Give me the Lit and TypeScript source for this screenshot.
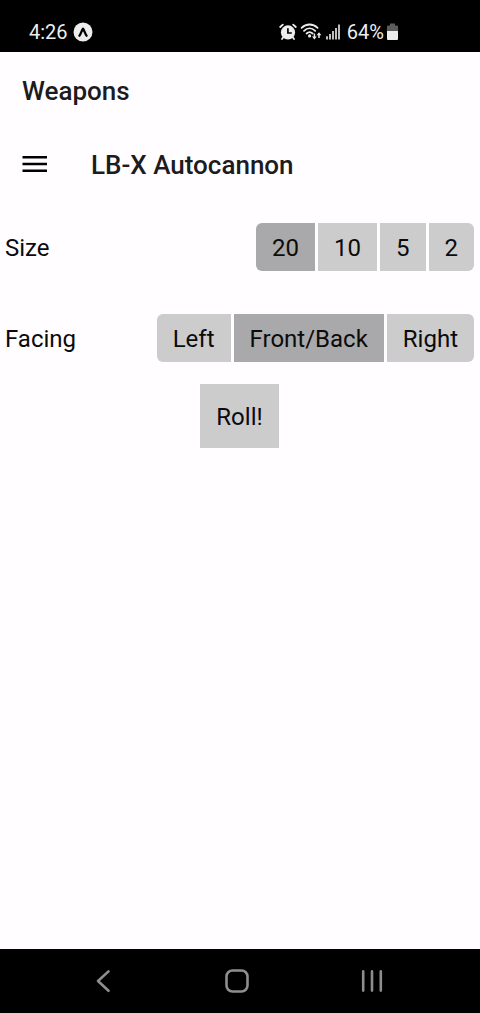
import { LitElement, html, css } from "lit";
import { customElement, property, state } from "lit/decorators.js";

@customElement("segmented-control")
export class SegmentedControl extends LitElement {
  @property() label = "";
  @property({ attribute: false }) options: string[] = [];
  @property() value = "";

  static styles = css`
    .row {
      display: flex;
      align-items: center;
      justify-content: space-between;
      min-height: 48px;
    }
    .label {
      padding-top: 2px;
    }
    .segments {
      display: flex;
      gap: 3px;
      border-radius: 6px;
      overflow: hidden;
    }
    .segment {
      height: 48px;
      padding: 2px 16px 0;
      border: 0;
      border-radius: 0;
      background: #cdcccd;
      color: #0b0b0b;
      font: inherit;
      cursor: pointer;
    }
    .segment[aria-pressed="true"] {
      background: #a9a8aa;
    }
  `;

  private pick(option: string) {
    this.value = option;
    this.dispatchEvent(new CustomEvent("pick", { detail: option }));
  }

  render() {
    return html`
      <div class="row">
        <span class="label" id="label">${this.label}</span>
        <div class="segments" role="group" aria-labelledby="label">
          ${this.options.map(
            (o) => html`<button
              class="segment"
              type="button"
              aria-pressed=${o === this.value ? "true" : "false"}
              @click=${() => this.pick(o)}
            >${o}</button>`
          )}
        </div>
      </div>
    `;
  }
}

@customElement("status-bar")
export class StatusBar extends LitElement {
  static styles = css`
    .bar {
      display: flex;
      align-items: center;
      justify-content: space-between;
      height: 52px;
      box-sizing: border-box;
      padding: 12px 82px 0 29px;
      background: #000;
      color: #ededed;
      font-size: 20px;
      line-height: 24px;
    }
    .group {
      display: flex;
      align-items: center;
    }
    .left {
      gap: 5px;
    }
    .right {
      gap: 3px;
    }
    svg {
      display: block;
    }
    .level {
      display: flex;
      align-items: center;
      gap: 3px;
      padding-left: 4px;
    }
  `;

  render() {
    return html`
      <div class="bar">
        <div class="group left">
          <span>4:26</span>
          <svg width="20" height="20" viewBox="0 0 20 20" aria-hidden="true">
            <circle cx="10" cy="10" r="9.5" fill="#ededed" />
            <path d="M6.4 13.7C7.8 12.2 8.7 8.4 10 6.6C11.3 8.4 12.2 12.2 13.6 13.7" fill="none" stroke="#000" stroke-width="2.3" stroke-linecap="round" stroke-linejoin="round" />
          </svg>
        </div>
        <div class="group right">
          <svg width="18" height="18" viewBox="0 0 18 18" aria-hidden="true">
            <circle cx="9" cy="9.4" r="7.1" fill="#ededed" />
            <path d="M1.2 4L3.8 1.6M16.8 4L14.2 1.6M4.4 14L3 16M13.6 14L15 16" stroke="#ededed" stroke-width="1.8" stroke-linecap="round" />
            <path d="M8.9 5.2V10H12.8" fill="none" stroke="#000" stroke-width="1.7" />
          </svg>
          <svg width="23" height="18" viewBox="1 0 23 18" aria-hidden="true">
            <g fill="none" stroke="#ededed" stroke-width="1.8" stroke-linecap="round">
              <path d="M2.6 4.8C7.2 0.4 14 0.4 18.6 4.8" />
              <path d="M5 7.8C8.4 4.6 12.8 4.6 16.2 7.8" />
              <path d="M7.6 10.5C9.4 8.9 11.8 8.9 13.6 10.5" />
            </g>
            <circle cx="10.6" cy="12.9" r="1.6" fill="#ededed" />
            <path d="M15.4 10.6V14.6M20 11.4V15" stroke="#ededed" stroke-width="1.5" />
            <path d="M13 13.4H17.8L15.4 16.4ZM17.6 12.2H22.4L20 9.2Z" fill="#ededed" />
          </svg>
          <svg width="14" height="18" viewBox="0 0 14 18" aria-hidden="true">
            <path d="M1 13.2V16.4M4 11V16.4M7 8V16.4M10 5V16.4M13 1.6V16.4" stroke="#ededed" stroke-width="1.6" />
          </svg>
          <div class="level">
            <span>64%</span>
            <svg width="11" height="18" viewBox="0 0 11 18" aria-hidden="true">
              <path d="M0 3.4Q0 2.4 1 2.4H3V0.6H8V2.4H10Q11 2.4 11 3.4V9H0Z" fill="#5c5c5c" />
              <path d="M0 8H11V16Q11 17 10 17H1Q0 17 0 16Z" fill="#ededed" />
            </svg>
          </div>
        </div>
      </div>
    `;
  }
}

@customElement("nav-bar")
export class NavBar extends LitElement {
  static styles = css`
    .bar {
      display: grid;
      grid-template-columns: repeat(3, 1fr);
      place-items: center;
      height: 64px;
      padding: 0 41px 0 36px;
      background: #000;
    }
    .key {
      display: grid;
      place-items: center;
      width: 48px;
      height: 48px;
      padding: 0;
      border: 0;
      background: none;
      cursor: pointer;
    }
    svg {
      fill: none;
      stroke: #8e8e8e;
      stroke-width: 2.6;
      stroke-linecap: round;
      stroke-linejoin: round;
    }
  `;

  render() {
    return html`
      <nav class="bar">
        <button class="key" type="button" aria-label="Back">
          <svg width="24" height="24" viewBox="0 0 24 24"><path d="M17.5 2.4L7 12L17.5 21.8" /></svg>
        </button>
        <button class="key" type="button" aria-label="Home">
          <svg width="24" height="24" viewBox="0 0 24 24"><rect x="1.5" y="1.5" width="21" height="21" rx="6" /></svg>
        </button>
        <button class="key" type="button" aria-label="Recent apps">
          <svg width="24" height="24" viewBox="0 0 24 24"><path d="M3.2 2.4V21.6M12 2.4V21.6M20.8 2.4V21.6" /></svg>
        </button>
      </nav>
    `;
  }
}

@customElement("app-root")
export class AppRoot extends LitElement {
  @state() private size = "20";
  @state() private facing = "Front/Back";

  static styles = css`
    :host {
      display: flex;
      flex-direction: column;
      min-height: 100vh;
      background: #fffdff;
      color: #0b0b0b;
      font-family: Roboto, "Liberation Sans", sans-serif;
      font-size: 24px;
      line-height: 32px;
    }
    .bar {
      display: flex;
      align-items: center;
      height: 76px;
      padding: 0 22px;
      color: #1c1b1d;
    }
    .screen {
      height: 72px;
      gap: 43px;
    }
    .title {
      margin: 0;
      padding-top: 2px;
      font-size: 26px;
      font-weight: 500;
      line-height: 32px;
    }
    .menu {
      display: grid;
      place-items: center;
      padding: 0;
      border: 0;
      background: none;
      cursor: pointer;
    }
    .menu svg {
      display: block;
    }
    .form {
      flex: 1;
      display: flex;
      flex-direction: column;
      gap: 43px;
      padding: 23px 6px 0 5px;
    }
    .actions {
      display: flex;
      justify-content: center;
      margin-top: -21px;
    }
    .roll {
      height: 64px;
      padding: 2px 16px 0;
      border: 0;
      border-radius: 0;
      background: #cdcccd;
      color: inherit;
      font: inherit;
      cursor: pointer;
    }
  `;

  render() {
    return html`
      <status-bar></status-bar>
      <header class="bar">
        <h1 class="title">Weapons</h1>
      </header>
      <div class="bar screen">
        <button class="menu" type="button" aria-label="Open menu">
          <svg width="26" height="18" viewBox="0 0 26 18">
            <path d="M0.5 2.2H25M0.5 9H25M0.5 15.8H25" stroke="#000" stroke-width="2.6" />
          </svg>
        </button>
        <h2 class="title">LB-X Autocannon</h2>
      </div>
      <main class="form">
        <segmented-control
          label="Size"
          .options=${["20", "10", "5", "2"]}
          .value=${this.size}
          @pick=${(e: CustomEvent<string>) => (this.size = e.detail)}
        ></segmented-control>
        <segmented-control
          label="Facing"
          .options=${["Left", "Front/Back", "Right"]}
          .value=${this.facing}
          @pick=${(e: CustomEvent<string>) => (this.facing = e.detail)}
        ></segmented-control>
        <div class="actions">
          <button class="roll" type="button">Roll!</button>
        </div>
      </main>
      <nav-bar></nav-bar>
    `;
  }
}
